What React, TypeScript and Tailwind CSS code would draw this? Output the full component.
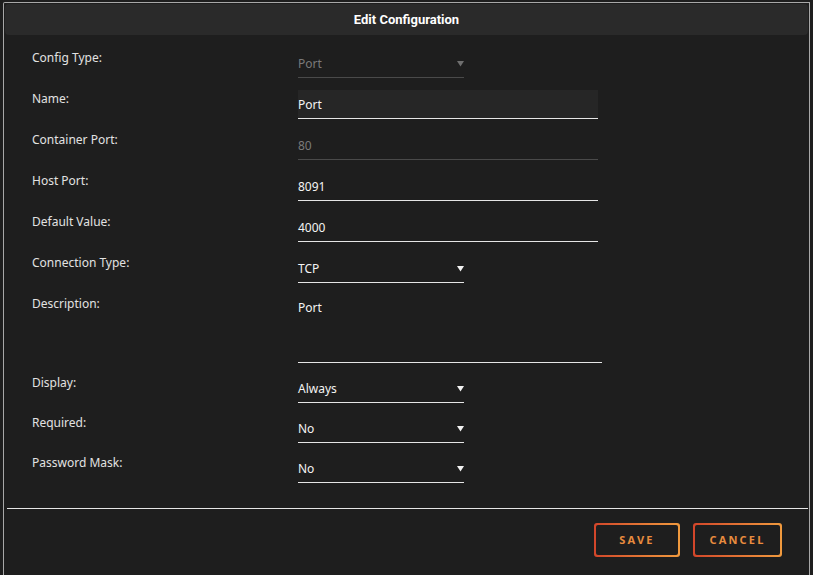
import React from "react";

const font = { fontFamily: '"Noto Sans", "Open Sans", sans-serif' };

function Label({ children }: { children: React.ReactNode }) {
  return <div className="w-[266px] shrink-0 pt-[2px] text-[12px] leading-[14px] text-[#e2e2e2]">{children}</div>;
}

function Arrow({ muted }: { muted?: boolean }) {
  return (
    <svg width="7" height="7" viewBox="0 0 7 7">
      <path d="M0 1 H7 L3.5 6.5 Z" fill={muted ? "#6f6f6f" : "#f2f2f2"} />
    </svg>
  );
}

function Select({ value, muted }: { value: string; muted?: boolean }) {
  return (
    <div
      className={`flex h-[29px] w-[166px] items-center justify-between border-b pt-[1px] text-[12px] ${
        muted ? "border-[#4a4a4a] text-[#7a7a7a]" : "border-[#e6e6e6] text-[#f4f4f4]"
      }`}
    >
      <span>{value}</span>
      <Arrow muted={muted} />
    </div>
  );
}

function Text({ value, muted, filled }: { value: string; muted?: boolean; filled?: boolean }) {
  return (
    <div
      className={`flex h-[29px] w-[300px] items-center border-b pt-[1px] text-[12px] ${
        muted ? "border-[#4a4a4a] text-[#7a7a7a]" : "border-[#e6e6e6] text-[#f4f4f4]"
      } ${filled ? "bg-[#262626]" : ""}`}
    >
      {value}
    </div>
  );
}

function Row({ label, children }: { label: string; children: React.ReactNode }) {
  return (
    <div className="flex items-start">
      <Label>{label}</Label>
      {children}
    </div>
  );
}

function Btn({ children, w }: { children: React.ReactNode; w: string }) {
  return (
    <div className={`rounded-[3px] bg-gradient-to-r from-[#d2452a] to-[#f09a3e] p-[2px] ${w}`}>
      <div className="flex h-[30px] items-center justify-center rounded-[2px] bg-[#1e1e1e] text-[11px] font-bold tracking-[0.2em] text-[#e98c3e]">
        {children}
      </div>
    </div>
  );
}

export default function App() {
  return (
    <div className="h-[575px] w-[813px] overflow-hidden bg-[#1e1e1e] pl-[3px] pt-[2px]" style={font}>
      <div className="h-[600px] w-[807px] rounded-tl-[2px] border border-b-0 border-[#a8a8a8] bg-[#1e1e1e]">
        <div
          className="mx-[1px] mt-[1px] flex h-[31px] items-center justify-center rounded-[4px] bg-[#2a2a2a] pt-[1px] text-[13px] font-bold text-white"
          style={{ fontFamily: "Roboto, sans-serif" }}
        >
          Edit Configuration
        </div>

        <div className="flex flex-col pl-[28px] pt-[14px]">
          <div className="flex flex-col gap-[12px]">
            <Row label="Config Type:">
              <Select value="Port" muted />
            </Row>
            <Row label="Name:">
              <Text value="Port" filled />
            </Row>
            <Row label="Container Port:">
              <Text value="80" muted />
            </Row>
            <Row label="Host Port:">
              <Text value="8091" />
            </Row>
            <Row label="Default Value:">
              <Text value="4000" />
            </Row>
            <Row label="Connection Type:">
              <Select value="TCP" />
            </Row>
            <Row label="Description:">
              <div className="h-[68px] w-[304px] border-b border-[#e6e6e6] pt-[5px] text-[12px] leading-[16px] text-[#f4f4f4]">Port</div>
            </Row>
          </div>
          <div className="mt-[11px] flex flex-col gap-[11px]">
            <Row label="Display:">
              <Select value="Always" />
            </Row>
            <Row label="Required:">
              <Select value="No" />
            </Row>
            <Row label="Password Mask:">
              <Select value="No" />
            </Row>
          </div>
        </div>

        <div className="ml-[3px] mr-[1px] mt-[25px] border-t border-[#e6e6e6]" />

        <div className="flex justify-end gap-[13px] pr-[27px] pt-[14px]">
          <Btn w="w-[86px]">SAVE</Btn>
          <Btn w="w-[89px]">CANCEL</Btn>
        </div>
      </div>
    </div>
  );
}
